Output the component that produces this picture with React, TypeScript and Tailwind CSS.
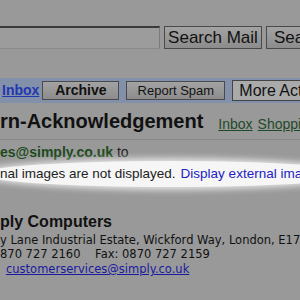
import React from 'react';

const arial = { fontFamily: '"Liberation Sans", Arial, sans-serif' };
const verdana = { fontFamily: '"DejaVu Sans", Verdana, sans-serif' };

function Btn({ label, className }: { label: string; className: string }) {
    return (
        <div className={`flex items-center justify-center border border-[#4a4a4a] bg-gradient-to-b from-[#a3a3a3] to-[#8c8c8c] text-[#111] shrink-0 whitespace-nowrap ${className}`}>
            {label}
        </div>
    );
}

export default function App() {
    return (
        <div className="relative w-[300px] h-[300px] overflow-hidden bg-[#999999] text-[#111]" style={arial}>
            {/* search row */}
            <div className="flex items-start gap-[4px] mt-[26px] h-[23px]">
                <div className="w-[160px] h-[23px] shrink-0 border-t-2 border-r border-b border-t-[#3a3a3a] border-r-[#7a7a7a] border-b-[#8a8a8a] bg-[#9c9c9c]" />
                <Btn label="Search Mail" className="w-[98px] h-[23px] text-[17px]" />
                <Btn label="Sea" className="w-[60px] h-[23px] text-[17px] justify-start pl-[7px]" />
            </div>

            {/* toolbar */}
            <div className="mt-[29px] h-[25px] bg-[#8290aa] flex items-center">
                <a className="ml-[2px] w-[44px] text-[14px] font-bold text-[#2237b0] underline">Inbox</a>
                <Btn label="Archive" className="ml-[3px] w-[77px] h-[19px] text-[14px] font-bold" />
                <Btn label="Report Spam" className="ml-[7px] w-[99px] h-[19px] text-[13px]" />
                <div className="ml-[7px] h-[21px] w-[70px] shrink-0 flex items-center pl-[6px] bg-[#aaaaaa] border border-[#444] text-[16px] whitespace-nowrap">More Acti</div>
            </div>

            {/* subject */}
            <div className="flex items-end h-[37px] pb-[8px] border-b border-[#888] whitespace-nowrap">
                <span className="text-[20px] font-bold leading-none">rn-Acknowledgement</span>
                <a className="ml-[15px] text-[14px] leading-none text-[#1f4a2a] underline">Inbox</a>
                <a className="ml-[5px] text-[14px] leading-none text-[#1f4a2a] underline">Shopping</a>
            </div>

            {/* sender */}
            <div className="mt-[4px] h-[17px] text-[14px] leading-[17px] whitespace-nowrap">
                <span className="font-bold text-[#1d4a1d]">es@simply.co.uk</span>
                <span className="text-[#222]"> to</span>
            </div>

            {/* highlighted images notice */}
            <div className="relative h-[26px]">
                <div className="absolute -left-[20px] -right-[60px] top-0 bottom-0 rounded-[50%] bg-[#f6f6f6] shadow-[0_0_6px_3px_rgba(245,245,245,0.8)]" />
                <div className="relative h-full flex items-center text-[13.5px] whitespace-nowrap">
                    <span className="text-[#222]">nal images are not displayed.</span>
                    <span className="ml-[5px] text-[#2222c4]">Display external images</span>
                </div>
            </div>

            {/* signature */}
            <div className="mt-[25px] whitespace-nowrap" style={verdana}>
                <div className="text-[16px] font-bold leading-[19px]" style={arial}>ply Computers</div>
                <div className="text-[11.5px] leading-[13px] mt-[3px]">y Lane Industrial Estate, Wickford Way, London, E17</div>
                <div className="text-[11.5px] leading-[13px] mt-[1px]">870 727 2160&nbsp;&nbsp;&nbsp; Fax: 0870 727 2159</div>
                <div className="text-[11.5px] leading-[13px] mt-[2px] ml-[6px]">
                    <a className="text-[#1a1aa0] underline">customerservices@simply.co.uk</a>
                </div>
            </div>
        </div>
    );
}
